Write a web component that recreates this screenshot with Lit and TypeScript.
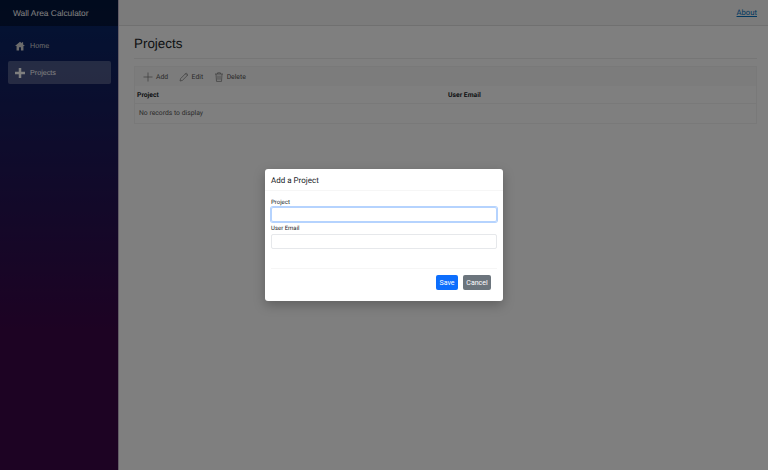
import { LitElement, html, css } from 'lit';
import { customElement } from 'lit/decorators.js';

@customElement('app-root')
export class AppRoot extends LitElement {
  static styles = css`
    :host {
      display: flex;
      height: 100vh;
      position: relative;
      overflow: hidden;
      background: #fff;
      font-family: Roboto, sans-serif;
      color: #212529;
      text-rendering: geometricPrecision;
    }
    .sidebar {
      width: 119px;
      box-sizing: border-box;
      flex: none;
      border-right: 1px solid #c4b8cc;
      background: linear-gradient(180deg, #052767 0%, #3a0647 70%);
    }
    .brand {
      height: 26px;
      background: rgba(0, 0, 0, 0.4);
      color: #fff;
      font: 8.4px 'Liberation Sans', sans-serif;
      line-height: 26px;
      padding-left: 13px;
      white-space: nowrap;
    }
    .nav {
      padding: 8px 7px 0 8px;
      display: flex;
      flex-direction: column;
      gap: 4px;
    }
    .nav-item {
      height: 23px;
      display: flex;
      align-items: center;
      gap: 5px;
      padding-left: 7px;
      border-radius: 2px;
      color: #d7d7d7;
      font: 7.2px 'Liberation Sans', sans-serif;
    }
    .nav-item.active {
      background: rgba(255, 255, 255, 0.25);
      color: #fff;
    }
    .nav-item svg {
      width: 10px;
      height: 10px;
      fill: currentColor;
    }
    .main {
      flex: 1;
      min-width: 0;
    }
    .top {
      height: 26px;
      box-sizing: border-box;
      background: #f7f7f7;
      border-bottom: 1px solid #e0e0e0;
      display: flex;
      align-items: center;
      justify-content: flex-end;
      padding-right: 11px;
    }
    .top a {
      color: #0071c1;
      font-size: 7.7px;
      text-decoration: underline;
    }
    .content {
      padding: 10px 11px 0 15px;
    }
    h1 {
      margin: 0;
      font: 400 13.4px/15px 'Liberation Sans', sans-serif;
      padding-bottom: 7px;
      border-bottom: 1px solid #ececec;
    }
    .grid {
      margin-top: 7px;
      border: 1px solid #f2f2f2;
      font-size: 6.8px;
    }
    .toolbar {
      height: 19px;
      box-sizing: border-box;
      padding: 1px 0 0 8px;
      background: #f8f8f8;
      display: flex;
      align-items: center;
      gap: 10.5px;
      color: #555;
    }
    .tool {
      display: flex;
      align-items: center;
      gap: 3px;
    }
    .tool svg {
      width: 10px;
      height: 10px;
      fill: none;
      stroke: #777;
      stroke-width: 0.7;
    }
    .head {
      display: grid;
      grid-template-columns: 311px 1fr;
      height: 17px;
      align-items: center;
      padding-left: 2px;
      font-weight: 700;
      border-bottom: 1px solid #f2f2f2;
    }
    .empty {
      height: 19px;
      line-height: 19px;
      padding-left: 4px;
      color: #555;
    }
    .backdrop {
      position: absolute;
      inset: 0;
      background: rgba(0, 0, 0, 0.5);
      display: flex;
      align-items: flex-start;
      justify-content: center;
      padding-top: 169px;
      box-sizing: border-box;
    }
    .dialog {
      width: 238px;
      height: 132px;
      box-sizing: border-box;
      background: #fff;
      border-radius: 3px;
      box-shadow: 0 4px 12px rgba(0, 0, 0, 0.25);
    }
    .dialog-head {
      height: 22px;
      box-sizing: border-box;
      padding-left: 6px;
      line-height: 24px;
      font-size: 8px;
      border-bottom: 1px solid #f6f6f6;
    }
    .dialog-body {
      padding: 7px 6px 0;
      font-size: 6px;
    }
    label {
      display: block;
      height: 9px;
      line-height: 9px;
    }
    .input {
      height: 15px;
      box-sizing: border-box;
      border: 1px solid #e6e8eb;
      border-radius: 2px;
      margin-bottom: 2px;
    }
    .input.focus {
      border-color: #b5d3fe;
      box-shadow: 0 0 0 1px #b5d3fe;
    }
    .input.email {
      margin-top: 1px;
    }
    .dialog-foot {
      margin: 19px 6px 0;
      padding: 6px 6px 0 0;
      border-top: 1px solid #f6f6f6;
      display: flex;
      justify-content: flex-end;
      gap: 5px;
    }
    button {
      height: 15px;
      border: 0;
      border-radius: 2px;
      padding: 0;
      color: #fff;
      font: 7px Roboto, sans-serif;
    }
    .save {
      width: 22px;
      background: #0d6efd;
    }
    .cancel {
      width: 28px;
      background: #6c757d;
    }
  `;

  render() {
    return html`
      <div class="sidebar">
        <div class="brand">Wall Area Calculator</div>
        <div class="nav">
          <div class="nav-item">
            <svg viewBox="0 0 16 16"><path d="M8 1 0 8h2.5v7h4v-5h3v5h4V8H16L13 5.4V2h-2v1.6z" /></svg>
            Home
          </div>
          <div class="nav-item active">
            <svg viewBox="0 0 16 16"><path d="M6 0h4v6h6v4h-6v6H6v-6H0V6h6z" /></svg>
            Projects
          </div>
        </div>
      </div>
      <div class="main">
        <div class="top"><a>About</a></div>
        <div class="content">
          <h1>Projects</h1>
          <div class="grid">
            <div class="toolbar">
              <span class="tool">
                <svg viewBox="0 0 10 10"><path d="M5 .5v9M.5 5h9" /></svg>
                Add
              </span>
              <span class="tool">
                <svg viewBox="0 0 10 10"><path d="M1 9l.6-2.4L7.2 1l1.8 1.8L3.4 8.4zM6.4 1.8l1.8 1.8" /></svg>
                Edit
              </span>
              <span class="tool">
                <svg viewBox="0 0 10 10"><path d="M1 2h8M3.6 2V.8h2.8V2M2 2l.5 7.4h5L8 2M4 3.6v4.2M6 3.6v4.2" /></svg>
                Delete
              </span>
            </div>
            <div class="head"><span>Project</span><span>User Email</span></div>
            <div class="empty">No records to display</div>
          </div>
        </div>
      </div>
      <div class="backdrop">
        <div class="dialog">
          <div class="dialog-head">Add a Project</div>
          <div class="dialog-body">
            <label>Project</label>
            <div class="input focus"></div>
            <label>User Email</label>
            <div class="input email"></div>
          </div>
          <div class="dialog-foot">
            <button class="save">Save</button>
            <button class="cancel">Cancel</button>
          </div>
        </div>
      </div>
    `;
  }
}
